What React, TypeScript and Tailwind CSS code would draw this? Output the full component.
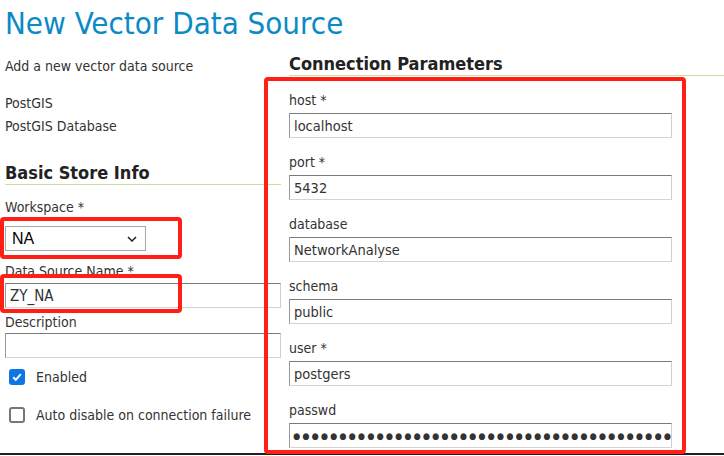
import React from "react";

const FONT = '"DejaVu Sans Condensed", "Liberation Sans", sans-serif';

function TextInput({ value, className = "" }: { value: string; className?: string }) {
  return (
    <div
      className={`h-[25px] bg-white border border-t-[#7b7b7b] border-l-[#9a9a9a] border-r-[#cfcfcf] border-b-[#d4d4d4] pl-[4px] text-[14.5px] leading-[24px] text-[#333] whitespace-nowrap overflow-hidden ${className}`}
    >
      {value}
    </div>
  );
}

function Field({ label, value }: { label: string; value: string }) {
  return (
    <div className="mt-[14px]">
      <div className="text-[14px] leading-[20px] text-[#333]">{label}</div>
      <TextInput value={value} className="mt-[3px] w-[383px]" />
    </div>
  );
}

export default function App() {
  const dots = "●".repeat(41);
  return (
    <div className="relative w-[724px] h-[456px] overflow-hidden bg-white" style={{ fontFamily: FONT }}>
      <div className="h-[53px] pl-[5px] pt-[1px]">
        <h1 className="text-[31px] leading-[44px] text-[#0c8ac6]">New Vector Data Source</h1>
      </div>
      <div className="flex">
        {/* Left column */}
        <div className="w-[281px] pl-[5px] flex flex-col">
          <p className="mt-[3px] text-[14px] leading-[20px] text-[#333]">Add a new vector data source</p>
          <p className="mt-[16px] text-[14px] leading-[23px] text-[#333]">PostGIS</p>
          <p className="text-[14px] leading-[23px] text-[#333]">PostGIS Database</p>
          <h2 className="mt-[24px] text-[18px] leading-[22px] font-bold text-[#222] border-b border-[#c5e09c]">
            Basic Store Info
          </h2>
          <div className="mt-[12px] text-[14px] leading-[20px] text-[#333]">Workspace *</div>
          <div className="mt-[9px] w-[141px] h-[25px] border border-[#a8a8a8] bg-white flex items-center justify-between pl-[6px] pr-[8px]">
            <span className="text-[16px] text-black" style={{ fontFamily: '"Liberation Sans", sans-serif' }}>
              NA
            </span>
            <svg width="10" height="6" viewBox="0 0 10 6" fill="none">
              <path d="M1 1l4 4 4-4" stroke="#222" strokeWidth="1.5" />
            </svg>
          </div>
          <div className="mt-[10px] text-[14px] leading-[20px] text-[#333]">Data Source Name *</div>
          <TextInput value="ZY_NA" className="mt-[2px] w-full text-[15px]" />
          <div className="mt-[4px] text-[14px] leading-[20px] text-[#333]">Description</div>
          <TextInput value="" className="mt-[1px] w-full" />
          <div className="mt-[11px] flex items-center h-[16px]">
            <div className="ml-[4px] w-[16px] h-[16px] rounded-[3px] bg-[#0f74e8] flex items-center justify-center">
              <svg width="12" height="12" viewBox="0 0 12 12" fill="none">
                <path d="M2.2 6.2l2.6 2.6 5-5.6" stroke="white" strokeWidth="2" />
              </svg>
            </div>
            <span className="ml-[11px] text-[14px] text-[#333]">Enabled</span>
          </div>
          <div className="mt-[22px] flex items-center h-[16px]">
            <div className="ml-[4px] w-[16px] h-[16px] rounded-[3px] border-2 border-[#767676] bg-white" />
            <span className="ml-[11px] text-[14px] text-[#333]">Auto disable on connection failure</span>
          </div>
        </div>
        {/* Right column */}
        <div className="ml-[8px] flex-1 flex flex-col">
          <h2 className="text-[18px] leading-[22px] font-bold text-[#222] border-b border-[#c5e09c]">
            Connection Parameters
          </h2>
          <Field label="host *" value="localhost" />
          <Field label="port *" value="5432" />
          <Field label="database" value="NetworkAnalyse" />
          <Field label="schema" value="public" />
          <Field label="user *" value="postgers" />
          <div className="mt-[14px]">
            <div className="text-[14px] leading-[20px] text-[#333]">passwd</div>
            <div className="mt-[3px] w-[383px] h-[25px] bg-white border border-t-[#7b7b7b] border-l-[#9a9a9a] border-r-[#cfcfcf] border-b-[#d4d4d4] pl-[3px] whitespace-nowrap text-[9px] leading-[24px] tracking-[2.2px] text-[#333]">
              {dots}
            </div>
          </div>
        </div>
      </div>

      {/* bottom edge */}
      <div className="absolute left-0 right-0 top-[453px] h-[2px] bg-[#1f1f1f]" />

      {/* annotation boxes */}
      <div className="absolute left-0 top-[217px] w-[182px] h-[42px] border-[4px] border-[#ff1f14] rounded-[4px]" />
      <div className="absolute left-0 top-[274px] w-[182px] h-[39px] border-[4px] border-[#ff1f14] rounded-[4px]" />
      <div className="absolute left-[264px] top-[77px] w-[422px] h-[377px] border-[4px] border-[#ff1f14] rounded-[4px]" />
    </div>
  );
}
